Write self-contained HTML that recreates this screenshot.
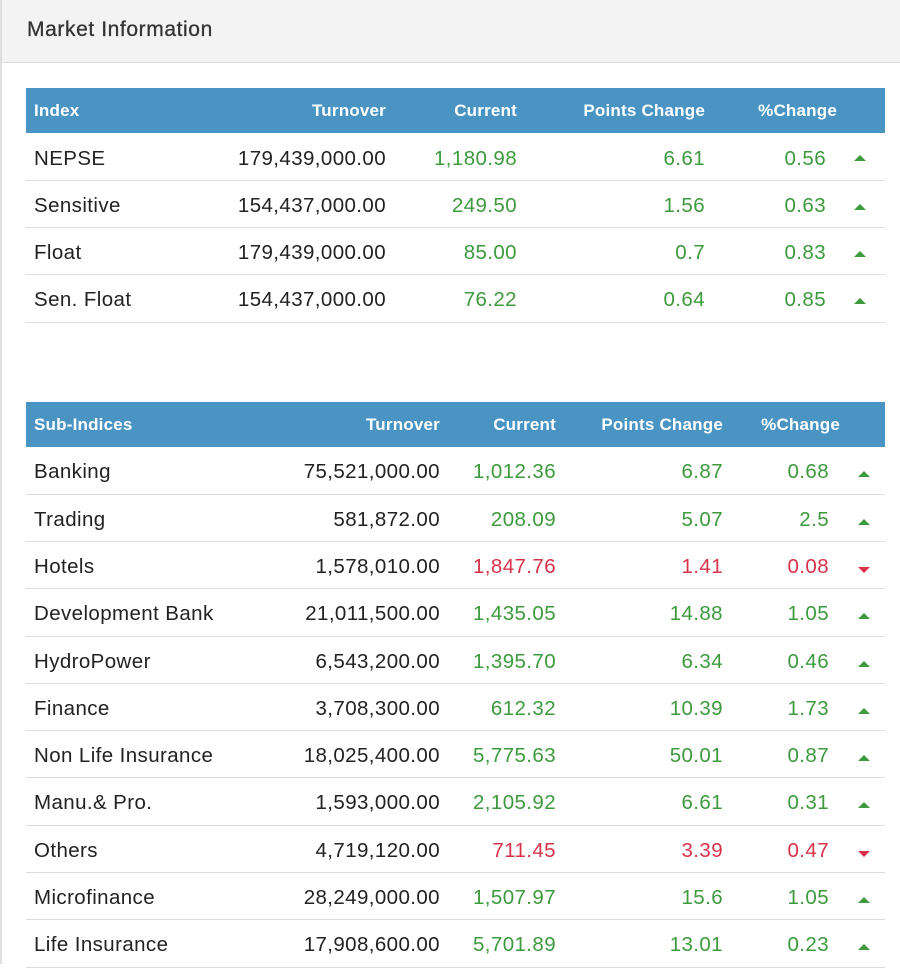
<!DOCTYPE html>
<html><head><meta charset="utf-8"><style>
*{margin:0;padding:0;box-sizing:border-box}
body{width:900px;height:964px;overflow:hidden;background:#fff;font-family:"Liberation Sans",Arial,sans-serif;position:relative}
.top{position:absolute;left:0;top:0;width:900px;height:63px;background:#f3f3f3;border-bottom:1px solid #ddd;border-left:2px solid #ddd}
.top span{position:absolute;left:25px;top:18px;font-size:21px;color:#333;letter-spacing:0.6px;-webkit-text-stroke:0.3px #333}
.lb{position:absolute;left:0;top:63px;width:2px;height:901px;background:#e0e0e0}
.hd{position:absolute;left:26px;width:859px;height:45px;background:#4a94c4;color:#fff;font-weight:bold;font-size:17px;letter-spacing:0.2px}
.hd span,.r span{position:absolute;white-space:nowrap}
.hd span{top:13px}
.r{position:absolute;left:26px;width:859px;border-bottom:1px solid #ddd;font-size:20.5px;color:#222;letter-spacing:0.4px}
.r span{margin-top:2px}
.g{color:#3d9a3d}.d{color:#d7334b}
.up,.dn{width:0;height:0;border-left:6px solid transparent;border-right:6px solid transparent}
.up{border-bottom:6px solid #3d9a3d}
.dn{border-top:6px solid #d7334b}
</style></head><body>
<div class="top"><span>Market Information</span></div>
<div class="lb"></div>

<div class="hd" style="top:88px">
<span style="left:8px">Index</span>
<span style="right:499px">Turnover</span>
<span style="right:368px">Current</span>
<span style="right:180px">Points Change</span>
<span style="right:48px">%Change</span>
</div>

<div class="hd" style="top:402px">
<span style="left:8px">Sub-Indices</span>
<span style="right:445px">Turnover</span>
<span style="right:329px">Current</span>
<span style="right:162px">Points Change</span>
<span style="right:45px">%Change</span>
</div>

<div class="r" style="top:133px;height:48px"><span style="left:8px;top:12px">NEPSE</span><span style="right:499px;top:12px">179,439,000.00</span><span class="g" style="right:368px;top:12px">1,180.98</span><span class="g" style="right:180px;top:12px">6.61</span><span class="g" style="right:59px;top:12px">0.56</span><span class="up" style="left:828px;top:20px"></span></div>
<div class="r" style="top:181px;height:47px"><span style="left:8px;top:11px">Sensitive</span><span style="right:499px;top:11px">154,437,000.00</span><span class="g" style="right:368px;top:11px">249.50</span><span class="g" style="right:180px;top:11px">1.56</span><span class="g" style="right:59px;top:11px">0.63</span><span class="up" style="left:828px;top:21px"></span></div>
<div class="r" style="top:228px;height:47px"><span style="left:8px;top:11px">Float</span><span style="right:499px;top:11px">179,439,000.00</span><span class="g" style="right:368px;top:11px">85.00</span><span class="g" style="right:180px;top:11px">0.7</span><span class="g" style="right:59px;top:11px">0.83</span><span class="up" style="left:828px;top:21px"></span></div>
<div class="r" style="top:275px;height:48px"><span style="left:8px;top:11px">Sen. Float</span><span style="right:499px;top:11px">154,437,000.00</span><span class="g" style="right:368px;top:11px">76.22</span><span class="g" style="right:180px;top:11px">0.64</span><span class="g" style="right:59px;top:11px">0.85</span><span class="up" style="left:828px;top:21px"></span></div>

<div class="r" style="top:447px;height:48px"><span style="left:8px;top:11px">Banking</span><span style="right:445px;top:11px">75,521,000.00</span><span class="g" style="right:329px;top:11px">1,012.36</span><span class="g" style="right:162px;top:11px">6.87</span><span class="g" style="right:56px;top:11px">0.68</span><span class="up" style="left:832px;top:22px"></span></div>
<div class="r" style="top:495px;height:47px"><span style="left:8px;top:11px">Trading</span><span style="right:445px;top:11px">581,872.00</span><span class="g" style="right:329px;top:11px">208.09</span><span class="g" style="right:162px;top:11px">5.07</span><span class="g" style="right:56px;top:11px">2.5</span><span class="up" style="left:832px;top:22px"></span></div>
<div class="r" style="top:542px;height:47px"><span style="left:8px;top:11px">Hotels</span><span style="right:445px;top:11px">1,578,010.00</span><span class="d" style="right:329px;top:11px">1,847.76</span><span class="d" style="right:162px;top:11px">1.41</span><span class="d" style="right:56px;top:11px">0.08</span><span class="dn" style="left:832px;top:23px"></span></div>
<div class="r" style="top:589px;height:48px"><span style="left:8px;top:11px">Development Bank</span><span style="right:445px;top:11px">21,011,500.00</span><span class="g" style="right:329px;top:11px">1,435.05</span><span class="g" style="right:162px;top:11px">14.88</span><span class="g" style="right:56px;top:11px">1.05</span><span class="up" style="left:832px;top:22px"></span></div>
<div class="r" style="top:637px;height:47px"><span style="left:8px;top:11px">HydroPower</span><span style="right:445px;top:11px">6,543,200.00</span><span class="g" style="right:329px;top:11px">1,395.70</span><span class="g" style="right:162px;top:11px">6.34</span><span class="g" style="right:56px;top:11px">0.46</span><span class="up" style="left:832px;top:22px"></span></div>
<div class="r" style="top:684px;height:47px"><span style="left:8px;top:11px">Finance</span><span style="right:445px;top:11px">3,708,300.00</span><span class="g" style="right:329px;top:11px">612.32</span><span class="g" style="right:162px;top:11px">10.39</span><span class="g" style="right:56px;top:11px">1.73</span><span class="up" style="left:832px;top:22px"></span></div>
<div class="r" style="top:731px;height:47px"><span style="left:8px;top:11px">Non Life Insurance</span><span style="right:445px;top:11px">18,025,400.00</span><span class="g" style="right:329px;top:11px">5,775.63</span><span class="g" style="right:162px;top:11px">50.01</span><span class="g" style="right:56px;top:11px">0.87</span><span class="up" style="left:832px;top:22px"></span></div>
<div class="r" style="top:778px;height:48px"><span style="left:8px;top:11px">Manu.&amp; Pro.</span><span style="right:445px;top:11px">1,593,000.00</span><span class="g" style="right:329px;top:11px">2,105.92</span><span class="g" style="right:162px;top:11px">6.61</span><span class="g" style="right:56px;top:11px">0.31</span><span class="up" style="left:832px;top:22px"></span></div>
<div class="r" style="top:826px;height:47px"><span style="left:8px;top:11px">Others</span><span style="right:445px;top:11px">4,719,120.00</span><span class="d" style="right:329px;top:11px">711.45</span><span class="d" style="right:162px;top:11px">3.39</span><span class="d" style="right:56px;top:11px">0.47</span><span class="dn" style="left:832px;top:23px"></span></div>
<div class="r" style="top:873px;height:47px"><span style="left:8px;top:11px">Microfinance</span><span style="right:445px;top:11px">28,249,000.00</span><span class="g" style="right:329px;top:11px">1,507.97</span><span class="g" style="right:162px;top:11px">15.6</span><span class="g" style="right:56px;top:11px">1.05</span><span class="up" style="left:832px;top:22px"></span></div>
<div class="r" style="top:920px;height:48px"><span style="left:8px;top:11px">Life Insurance</span><span style="right:445px;top:11px">17,908,600.00</span><span class="g" style="right:329px;top:11px">5,701.89</span><span class="g" style="right:162px;top:11px">13.01</span><span class="g" style="right:56px;top:11px">0.23</span><span class="up" style="left:832px;top:22px"></span></div>
</body></html>
